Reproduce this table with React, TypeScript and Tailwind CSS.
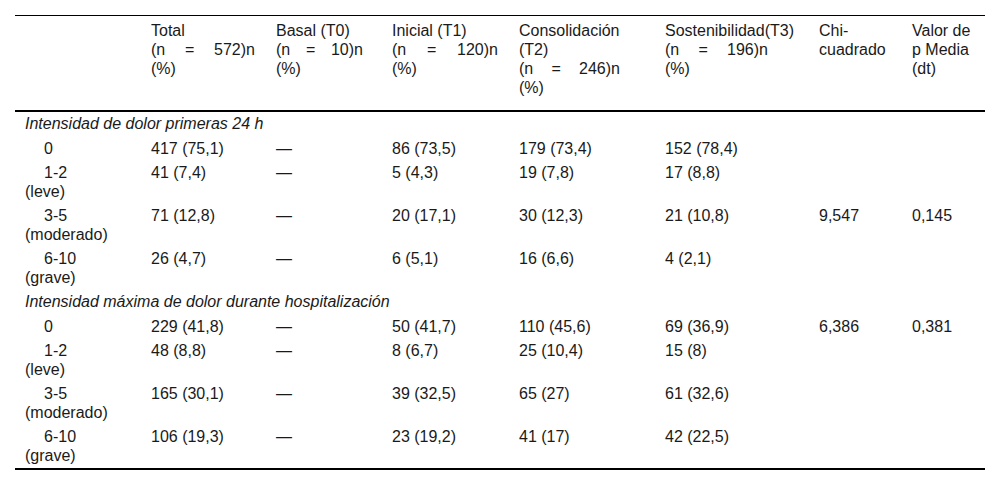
import React from "react";

type Row = {
  label: [string, string?];
  cells: string[];
};

const groups: { title: string; rows: Row[] }[] = [
  {
    title: "Intensidad de dolor primeras 24 h",
    rows: [
      { label: ["0"], cells: ["417 (75,1)", "—", "86 (73,5)", "179 (73,4)", "152 (78,4)", "", ""] },
      { label: ["1-2", "(leve)"], cells: ["41 (7,4)", "—", "5 (4,3)", "19 (7,8)", "17 (8,8)", "", ""] },
      { label: ["3-5", "(moderado)"], cells: ["71 (12,8)", "—", "20 (17,1)", "30 (12,3)", "21 (10,8)", "9,547", "0,145"] },
      { label: ["6-10", "(grave)"], cells: ["26 (4,7)", "—", "6 (5,1)", "16 (6,6)", "4 (2,1)", "", ""] },
    ],
  },
  {
    title: "Intensidad máxima de dolor durante hospitalización",
    rows: [
      { label: ["0"], cells: ["229 (41,8)", "—", "50 (41,7)", "110 (45,6)", "69 (36,9)", "6,386", "0,381"] },
      { label: ["1-2", "(leve)"], cells: ["48 (8,8)", "—", "8 (6,7)", "25 (10,4)", "15 (8)", "", ""] },
      { label: ["3-5", "(moderado)"], cells: ["165 (30,1)", "—", "39 (32,5)", "65 (27)", "61 (32,6)", "", ""] },
      { label: ["6-10", "(grave)"], cells: ["106 (19,3)", "—", "23 (19,2)", "41 (17)", "42 (22,5)", "", ""] },
    ],
  },
];

function NLine({ n, w }: { n: string; w: number }) {
  return (
    <div className="flex justify-between" style={{ width: w }}>
      <span>(n</span>
      <span>=</span>
      <span>{n})n</span>
    </div>
  );
}

export default function App() {
  return (
    <div
      className="w-[1000px] h-[489px] bg-white pt-[15px] px-[15px] text-[16px] leading-[18.5px] text-[#1a1a1a]"
      style={{ fontFamily: '"Liberation Sans", Arial, sans-serif' }}
    >
      <table className="w-[970px] table-fixed border-collapse">
        <colgroup>
          <col className="w-[126px]" />
          <col className="w-[125px]" />
          <col className="w-[116px]" />
          <col className="w-[127px]" />
          <col className="w-[146px]" />
          <col className="w-[154px]" />
          <col className="w-[93px]" />
          <col className="w-[83px]" />
        </colgroup>
        <thead>
          <tr className="border-t border-b-2 border-black align-top text-left leading-[19px]">
            <th className="font-normal pl-[10px] pt-[5px] pb-[13px]"></th>
            <th className="font-normal pl-[10px] pt-[5px] pb-[13px]">
              <div>Total</div>
              <NLine n="572" w={104} />
              <div>(%)</div>
            </th>
            <th className="font-normal pl-[10px] pt-[5px] pb-[13px]">
              <div>Basal (T0)</div>
              <NLine n="10" w={87} />
              <div>(%)</div>
            </th>
            <th className="font-normal pl-[10px] pt-[5px] pb-[13px]">
              <div>Inicial (T1)</div>
              <NLine n="120" w={106} />
              <div>(%)</div>
            </th>
            <th className="font-normal pl-[10px] pt-[5px] pb-[13px]">
              <div>Consolidación</div>
              <div>(T2)</div>
              <NLine n="246" w={101} />
              <div>(%)</div>
            </th>
            <th className="font-normal pl-[10px] pt-[5px] pb-[13px]">
              <div>Sostenibilidad(T3)</div>
              <NLine n="196" w={103} />
              <div>(%)</div>
            </th>
            <th className="font-normal pl-[10px] pt-[5px] pb-[13px]">
              <div>Chi-</div>
              <div>cuadrado</div>
            </th>
            <th className="font-normal pl-[10px] pt-[5px] pb-[13px]">
              <div>Valor de</div>
              <div>p Media</div>
              <div>(dt)</div>
            </th>
          </tr>
        </thead>
        <tbody className="border-b-2 border-black">
          {groups.map((g) => (
            <React.Fragment key={g.title}>
              <tr>
                <td colSpan={8} className="pl-[10px] py-[3px] italic">
                  {g.title}
                </td>
              </tr>
              {g.rows.map((r, i) => (
                <tr key={i} className="align-top">
                  <td className="pl-[10px] py-[3px]">
                    <div className="pl-[19px]">{r.label[0]}</div>
                    {r.label[1] && <div>{r.label[1]}</div>}
                  </td>
                  {r.cells.map((c, j) => (
                    <td key={j} className="pl-[10px] py-[3px] whitespace-nowrap">
                      {c}
                    </td>
                  ))}
                </tr>
              ))}
            </React.Fragment>
          ))}
        </tbody>
      </table>
    </div>
  );
}
